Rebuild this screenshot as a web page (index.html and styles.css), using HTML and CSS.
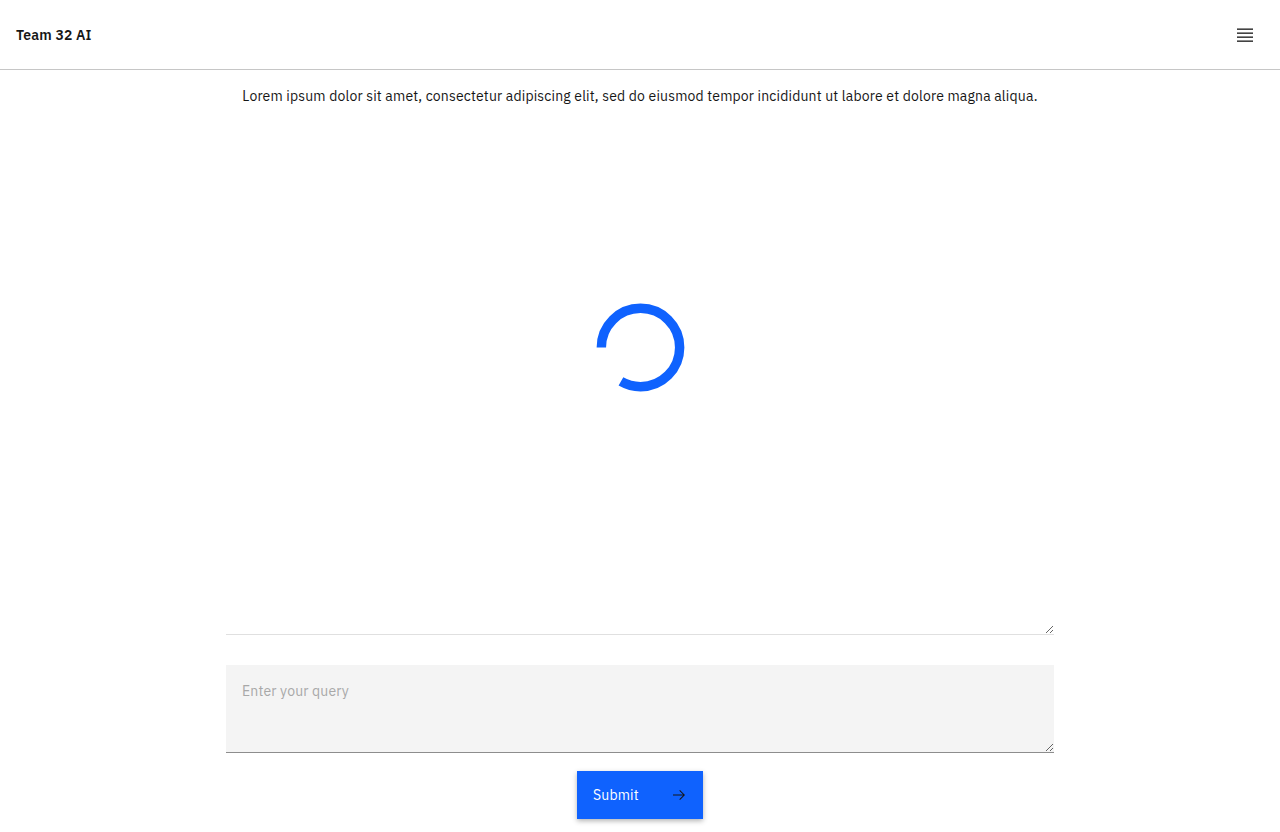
FILE: index.html
```html
<!DOCTYPE html>
<html lang="en">
<head>
<meta charset="utf-8">
<title>Team 32 AI</title>
<link rel="stylesheet" href="styles.css">
</head>
<body>
<header class="header">
  <span class="brand">Team 32 AI</span>
  <button class="menu-btn" aria-label="Menu">
    <svg width="20" height="20" viewBox="0 0 20 20" aria-hidden="true">
      <rect x="2" y="3.5" width="16" height="1.3" fill="#161616"/>
      <rect x="2" y="7.5" width="16" height="1.3" fill="#161616"/>
      <rect x="2" y="11.5" width="16" height="1.3" fill="#161616"/>
      <rect x="2" y="15.5" width="16" height="1.3" fill="#161616"/>
    </svg>
  </button>
</header>
<main class="main">
  <p class="intro">Lorem ipsum dolor sit amet, consectetur adipiscing elit, sed do eiusmod tempor incididunt ut labore et dolore magna aliqua.</p>
  <div class="output-wrap">
    <textarea class="output" readonly></textarea>
    <div class="loading">
      <svg width="89" height="89" viewBox="0 0 100 100" aria-hidden="true">
        <circle cx="50" cy="50" r="44" fill="none" stroke="#0f62fe" stroke-width="10.6" stroke-dasharray="230 300" transform="rotate(180 50 50)"/>
      </svg>
    </div>
  </div>
  <textarea class="query" placeholder="Enter your query"></textarea>
  <div class="actions">
    <button class="submit">Submit
      <svg class="submit-icon" width="16" height="16" viewBox="0 0 16 16" aria-hidden="true">
        <path d="M9 3 8.3 3.7 12.1 7.5H2v1h10.1l-3.8 3.8L9 13l5-5z" fill="#161616"/>
      </svg>
    </button>
  </div>
</main>
</body>
</html>
```
FILE: styles.css
```css
* { box-sizing: border-box; }
html, body { margin: 0; padding: 0; }
body {
  font-family: "IBM Plex Sans", "Noto Sans", "Open Sans", Arial, sans-serif;
  color: #161616;
  background: #ffffff;
  height: 832px;
  overflow: hidden;
}
.header {
  height: 70px;
  border-bottom: 1px solid #c6c6c6;
  display: flex;
  align-items: center;
  justify-content: space-between;
  padding: 0 16px;
}
.brand {
  font-size: 14px;
  font-weight: 600;
  letter-spacing: 0.16px;
}
.menu-btn {
  background: none;
  border: 0;
  padding: 0;
  width: 20px;
  height: 20px;
  margin-right: 9px;
  margin-top: 1px;
  display: flex;
}
.main {
  width: 828px;
  margin: 0 auto;
  display: flex;
  flex-direction: column;
}
.intro {
  margin: 16px 0 0;
  font-size: 14px;
  line-height: 20px;
  letter-spacing: 0.16px;
  text-align: center;
}
.output-wrap {
  position: relative;
  margin-top: 14px;
  height: 515px;
}
.output {
  display: block;
  width: 100%;
  height: 100%;
  border: 0;
  border-bottom: 1px solid #e0e0e0;
  background: #ffffff;
  outline: none;
  font-family: inherit;
  font-size: 14px;
  padding: 11px 16px;
}
.loading {
  position: absolute;
  left: 369.5px;
  top: 182.5px;
  width: 89px;
  height: 89px;
}
.loading svg { display: block; }
.query {
  display: block;
  margin-top: 30px;
  width: 100%;
  height: 88px;
  border: 0;
  border-bottom: 1px solid #8d8d8d;
  background: #f4f4f4;
  outline: none;
  font-family: inherit;
  font-size: 14px;
  line-height: 20px;
  letter-spacing: 0.16px;
  padding: 16px 16px;
  color: #161616;
}
.query::placeholder { color: #a8a8a8; }
.actions {
  display: flex;
  justify-content: center;
  margin-top: 18px;
}
.submit {
  width: 126px;
  height: 48px;
  background: #0f62fe;
  color: #ffffff;
  border: 0;
  font-family: inherit;
  font-size: 14px;
  letter-spacing: 0.16px;
  display: flex;
  align-items: center;
  justify-content: space-between;
  padding: 0 16px;
  box-shadow: 0 2px 5px rgba(0, 0, 0, 0.3);
}
.submit-icon { display: block; }
```
